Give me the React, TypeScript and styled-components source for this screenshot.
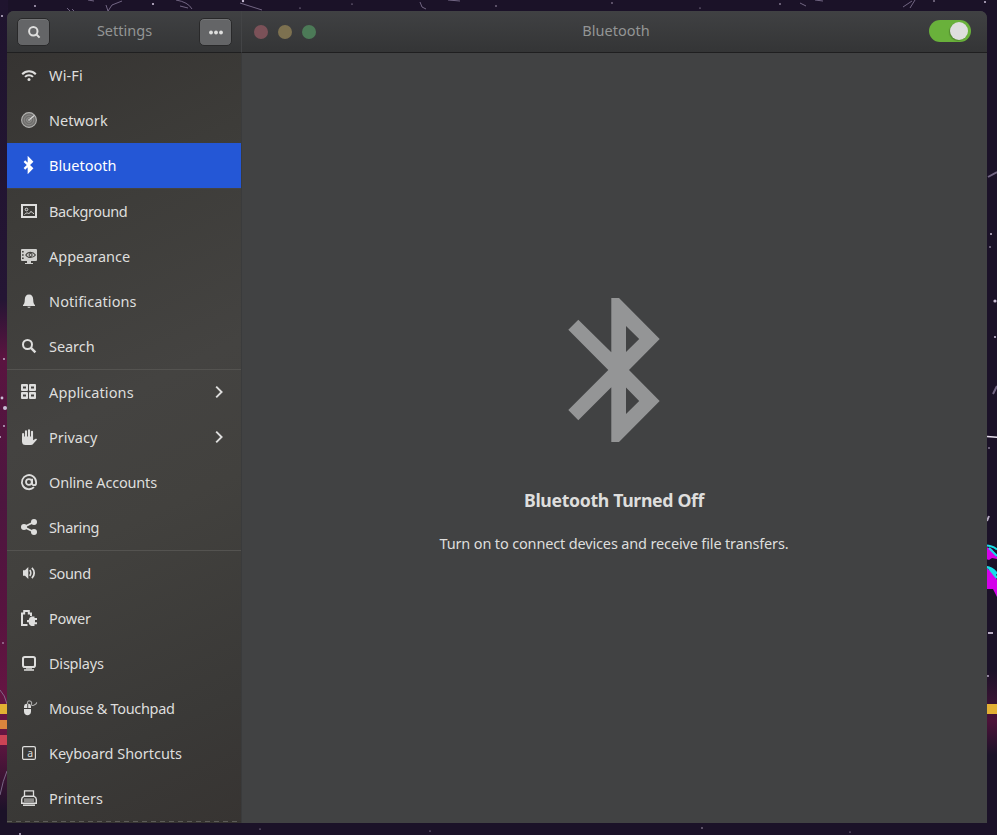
import React from "react";
import styled, { createGlobalStyle } from "styled-components";

const GlobalStyle = createGlobalStyle`
  * { box-sizing: border-box; }
  html, body { margin: 0; padding: 0; overflow: hidden; background: #1b1228; }
  body { font-family: "Noto Sans", "Open Sans", sans-serif; }
`;

const Desktop = styled.div`
  display: grid;
  grid-template: 835px / 997px;
  background: #1b1228;
`;

const WallpaperArt = styled.svg`
  grid-area: 1 / 1;
  display: block;
`;

const Window = styled.div`
  grid-area: 1 / 1;
  z-index: 1;
  margin: 11px 10px 12px 7px;
  display: grid;
  grid-template: 42px 1fr / 235px 1fr;
  border-radius: 7px 7px 0 0;
  overflow: hidden;
  background: #414243;
`;

const headerFill = `
  background: linear-gradient(#404143, #343536);
  border-bottom: 1px solid #1f1f20;
`;

const SideHeader = styled.header`
  ${headerFill}
  display: flex;
  align-items: center;
  justify-content: space-between;
  padding: 0 9px 0 10px;
  border-right: 1px solid #434446;
`;

const MainHeader = styled.header`
  ${headerFill}
  display: grid;
  grid-template-columns: 1fr auto 1fr;
  align-items: center;
  padding: 0 16px 0 12px;
`;

const HeaderTitle = styled.h1<{ $shift?: number }>`
  margin: 0 0 0 ${(p) => p.$shift ?? 0}px;
  padding-bottom: 3px;
  font-size: 14.5px;
  font-weight: 400;
  line-height: 20px;
  color: #939595;
`;

const HeaderButton = styled.button`
  width: 33px;
  height: 28px;
  margin: 0;
  padding: 0;
  display: flex;
  align-items: center;
  justify-content: center;
  border: 1px solid #29292a;
  border-radius: 5px;
  background: #646567;
  box-shadow: inset 0 1px #737476;
`;

const WindowControls = styled.div`
  display: flex;
  gap: 10px;
`;

const ControlDot = styled.span<{ $color: string }>`
  width: 14px;
  height: 14px;
  border-radius: 50%;
  background: ${(p) => p.$color};
`;

const Switch = styled.div`
  justify-self: end;
  display: flex;
  justify-content: flex-end;
  align-items: center;
  width: 42px;
  height: 22px;
  margin-bottom: 1px;
  padding: 0 3px;
  border-radius: 11px;
  background: #69b13b;
`;

const SwitchKnob = styled.span`
  width: 18px;
  height: 18px;
  border-radius: 50%;
  background: #dedede;
  box-shadow: -1px 1px 1px rgba(0, 0, 0, 0.22);
`;

const Sidebar = styled.nav`
  display: flex;
  flex-direction: column;
  border-right: 1px solid #3a3b3c;
  background: linear-gradient(155deg, #363432 0%, #3d3c39 20%, #444341 45%, #42413e 60%, #3a3937 85%, #373432 100%);
`;

const Group = styled.div<{ $line: string }>`
  border-bottom: 1px ${(p) => p.$line};
`;

const Row = styled.div<{ $selected?: boolean }>`
  display: flex;
  align-items: center;
  gap: 12px;
  height: 45px;
  padding: 0 14px 1px;
  color: ${(p) => (p.$selected ? "#ffffff" : "#dededd")};
  background: ${(p) => (p.$selected ? "#2457d6" : "transparent")};
`;

const RowLabel = styled.span<{ $tracking: number }>`
  flex: 1;
  white-space: nowrap;
  font-size: 14.5px;
  line-height: 20px;
  letter-spacing: ${(p) => p.$tracking}px;
`;

const Glyph = styled.svg`
  display: block;
  flex: none;
`;

const DashedEdge = styled.div`
  height: 2px;
  background: repeating-linear-gradient(90deg, #5d5c58 0 5px, #33312e 5px 9px);
  background-size: 100% 1px;
  background-repeat: no-repeat;
`;

const Main = styled.main`
  display: flex;
  flex-direction: column;
  align-items: center;
  padding: 245px 1px 0 0;
  background: #414243;
`;

const StatusTitle = styled.h2`
  margin: 45px 0 0;
  font-size: 17.7px;
  font-weight: 700;
  line-height: 26px;
  letter-spacing: -0.34px;
  color: #dededd;
`;

const StatusText = styled.p`
  margin: 20px 0 0;
  font-size: 14.5px;
  line-height: 20px;
  letter-spacing: -0.15px;
  color: #dededd;
`;

type IconName =
  | "wifi" | "network" | "bluetooth" | "background" | "appearance" | "bell" | "search"
  | "apps" | "hand" | "at" | "share" | "sound" | "power" | "display" | "mouse"
  | "keyboard" | "printer";

const icons: Record<IconName, React.ReactNode> = {
  wifi: (
    <g fill="none" stroke="currentColor" strokeWidth="2">
      <path d="M1.2 7.2C5 3.2 11 3.2 14.8 7.2" />
      <path d="M4 9.9C6.2 7.6 9.8 7.6 12 9.9" />
      <circle cx="8" cy="12.4" r="1.5" fill="currentColor" stroke="none" />
    </g>
  ),
  network: (
    <g fill="none">
      <circle cx="8" cy="8" r="7.4" fill="#6f6e6c" stroke="#b2b2b0" strokeWidth="1.1" />
      <circle cx="8" cy="8" r="4.8" stroke="#8f8e8c" strokeWidth=".8" />
      <circle cx="8" cy="8" r="2.4" stroke="#9b9a98" strokeWidth=".8" />
      <path d="M8 8l5.4-4.6" stroke="#dededd" strokeWidth="1.1" />
      <circle cx="8" cy="8" r="1" fill="#b2b2b0" />
    </g>
  ),
  bluetooth: (
    <path d="M3.4 4.2L10.8 11.2 7.8 14.3V1.7L10.8 4.8 3.4 11.8" fill="none" stroke="currentColor" strokeWidth="2.3" />
  ),
  background: (
    <g fill="none" stroke="currentColor">
      <path d="M1 2h14v12H1z" strokeWidth="2" />
      <circle cx="5.5" cy="6.5" r="1.3" strokeWidth="1" />
      <path d="M3.5 11.5C5 10 6 9.6 7.5 10.4S9 8.2 10 8.5 12 10.5 13 10.8" strokeWidth="1" />
    </g>
  ),
  appearance: (
    <g>
      <path d="M1 1h14a1 1 0 0 1 1 1v10a1 1 0 0 1-1 1h-5v2h2v1H4v-1h2v-2H1a1 1 0 0 1-1-1V2a1 1 0 0 1 1-1z" fill="#cfcfcd" />
      <path d="M1 3h1.700v1.600H1zM1 6.200h1.700v1.600H1zM1 9.400h1.700V11H1z" fill="#464542" />
      <path d="M4.800 7C6.800 3.500 12.200 3.500 14.400 7 12.200 10.400 6.800 10.400 4.800 7z" fill="none" stroke="#464542" strokeWidth="1.100" />
      <circle cx="9.600" cy="7" r="1.500" fill="none" stroke="#464542" strokeWidth="1.100" />
    </g>
  ),
  bell: (
    <path d="M8 1.500c2.900 0 4.100 2 4.200 5 .1 3 .5 4.800 1.800 5.600V13H2v-.9c1.300-.8 1.700-2.600 1.800-5.600C3.900 3.500 5.100 1.500 8 1.500zM6.300 13.700h3.400c-.5 1.400-2.900 1.400-3.400 0z" fill="currentColor" />
  ),
  search: (
    <g fill="none" stroke="currentColor">
      <circle cx="6.500" cy="6.500" r="4.500" strokeWidth="2" />
      <path d="M9.700 9.700L14.400 14.400" strokeWidth="2.400" />
    </g>
  ),
  apps: (
    <path
      fillRule="evenodd"
      fill="currentColor"
      d="M0 1q0-1 1-1h5q1 0 1 1v5q0 1-1 1H1Q0 7 0 6zM2 2.500h3v2H2zM8 1q0-1 1-1h5q1 0 1 1v5q0 1-1 1H9Q8 7 8 6zM10 2.500h3v2h-3zM0 9q0-1 1-1h5q1 0 1 1v5q0 1-1 1H1q-1 0-1-1zM2 10.500h3v2H2zM8 9q0-1 1-1h5q1 0 1 1v5q0 1-1 1H9q-1 0-1-1zM10 10.500h3v2h-3z"
    />
  ),
  hand: (
    <g fill="none" stroke="currentColor" strokeWidth="2.100" strokeLinecap="round">
      <path d="M2.100 5v7M5 2.200V9M8 1.200V9M11 2.800v8" />
      <path d="M1.050 7.500h11v3.800l2.600-1.500q1.600-.4 1.200.9L12.500 14.500Q11.500 16 9.500 16H4.500Q1.050 16 1.050 12.500z" fill="currentColor" stroke="none" />
    </g>
  ),
  at: (
    <g fill="none" stroke="currentColor" strokeWidth="1.800">
      <path d="M13 13.200A7.100 7.100 0 1 1 15.100 8v1.200c0 2.600-4 2.700-4 0V4.700" />
      <circle cx="7.900" cy="8" r="2.900" />
    </g>
  ),
  share: (
    <g fill="currentColor">
      <circle cx="13" cy="3" r="3" />
      <circle cx="3" cy="8" r="3" />
      <circle cx="13" cy="13" r="3" />
      <path d="M13 3L3 8l10 5" fill="none" stroke="currentColor" strokeWidth="1.900" />
    </g>
  ),
  sound: (
    <g fill="none" stroke="currentColor">
      <path d="M2 5.300h2L7.300 2v12L4 10.700H2z" fill="currentColor" stroke="none" />
      <path d="M8.700 5.200c1.400 1.500 1.400 4.100 0 5.600" strokeWidth="1.700" />
      <path d="M10.900 2.800c3 2.800 3 7.600 0 10.400" strokeWidth="1.800" />
    </g>
  ),
  power: (
    <g>
      <path d="M6.500 15H1V3.500h2.200V1h4.600v2.500H10V6" fill="none" stroke="currentColor" strokeWidth="2" />
      <path d="M10.500 6.500h3v1.500H16v2h-2v2.200h2v2h-2.500V16h-3Q8 15.500 7.700 12.300H6v-2.200h1.700Q8 7 10.500 6.500z" fill="currentColor" />
    </g>
  ),
  display: (
    <g fill="none" stroke="currentColor">
      <rect x="2" y="2" width="12" height="10" rx="1.800" strokeWidth="2" />
      <path d="M3 15h10" strokeWidth="1.500" />
      <path d="M5 13.800h6" strokeWidth="1" />
    </g>
  ),
  mouse: (
    <g>
      <path d="M3 8V6.500Q3 4 5.500 3.700h.8V8zM7.200 8V3.700H8Q10 4 10 6.500V8zM3 9h7v2.500c0 5-7 5-7 0z" fill="currentColor" />
      <path d="M6.500 4V2.200Q7 .5 9 1t1.600 3 2.600 1T15.500 2.300" fill="none" stroke="#a9a9a7" strokeWidth="1.100" />
    </g>
  ),
  keyboard: (
    <g>
      <rect x="1.600" y="1.600" width="12.800" height="12.800" rx="1.500" fill="none" stroke="currentColor" strokeWidth="1.200" />
      <text x="6.200" y="12" fontSize="10.500" fill="currentColor">a</text>
    </g>
  ),
  printer: (
    <g fill="none" stroke="currentColor">
      <path d="M3.500 6.500V.8h9v5.700" strokeWidth="1.300" />
      <path d="M3 6.300h10q2.300 1 2.300 3v4H.7v-4q0-2 2.300-3z" strokeWidth="1.400" />
      <path d="M3 8.300h10v3.700H3z" fill="#8c8b89" stroke="none" />
      <path d="M2 15.200h12" strokeWidth="1.500" />
    </g>
  ),
};

interface Item {
  icon: IconName;
  label: string;
  tracking: number;
  selected?: boolean;
  submenu?: boolean;
}

const groups: { line: string; items: Item[] }[] = [
  {
    line: "solid #454340",
    items: [
      { icon: "wifi", label: "Wi-Fi", tracking: 0.15 },
      { icon: "network", label: "Network", tracking: 0.05 },
      { icon: "bluetooth", label: "Bluetooth", tracking: 0.02, selected: true },
    ],
  },
  {
    line: "solid #545350",
    items: [
      { icon: "background", label: "Background", tracking: -0.42 },
      { icon: "appearance", label: "Appearance", tracking: -0.02 },
      { icon: "bell", label: "Notifications", tracking: 0.11 },
      { icon: "search", label: "Search", tracking: -0.05 },
    ],
  },
  {
    line: "solid #545350",
    items: [
      { icon: "apps", label: "Applications", tracking: 0.12, submenu: true },
      { icon: "hand", label: "Privacy", tracking: 0, submenu: true },
      { icon: "at", label: "Online Accounts", tracking: -0.19 },
      { icon: "share", label: "Sharing", tracking: -0.38 },
    ],
  },
  {
    line: "none",
    items: [
      { icon: "sound", label: "Sound", tracking: -0.36 },
      { icon: "power", label: "Power", tracking: -0.2 },
      { icon: "display", label: "Displays", tracking: -0.22 },
      { icon: "mouse", label: "Mouse & Touchpad", tracking: -0.33 },
      { icon: "keyboard", label: "Keyboard Shortcuts", tracking: -0.03 },
      { icon: "printer", label: "Printers", tracking: 0.03 },
    ],
  },
];

function Icon({ name }: { name: IconName }) {
  return (
    <Glyph width="16" height="16" viewBox="0 0 16 16" overflow="visible">
      {icons[name]}
    </Glyph>
  );
}

const stars = [
  [2, 16, 1], [35, 6, 0.9], [153, 4, 1.1], [243, 1, 1.2], [300, 8, 0.6], [352, 4, 0.6], [496, 6, 0.7],
  [612, 3, 0.7], [700, 8, 0.6], [780, 4, 0.8], [934, 1, 0.8], [985, 2, 1], [991, 234, 1], [990, 247, 0.8],
  [995, 301, 1.6], [995, 337, 1.1], [989, 448, 0.8], [992, 555, 0.8], [988, 676, 0.9], [4, 359, 0.9],
  [2, 398, 1.4], [5, 408, 2], [4, 426, 0.9], [0, 437, 1], [3, 643, 0.8], [20, 834, 1], [260, 829, 0.6],
  [430, 831, 0.6], [702, 828, 0.7], [850, 832, 0.6],
];

function Wallpaper() {
  return (
    <WallpaperArt width="997" height="835" viewBox="0 0 997 835">
      <defs>
        <linearGradient id="glowLeft" x1="0" y1="0" x2="0" y2="1">
          <stop offset="0" stopColor="#1f142e" />
          <stop offset=".37" stopColor="#241534" />
          <stop offset=".44" stopColor="#5a1440" />
          <stop offset=".62" stopColor="#4d163f" />
          <stop offset=".76" stopColor="#58133f" />
          <stop offset=".9" stopColor="#6a1644" />
          <stop offset="1" stopColor="#1d1229" />
        </linearGradient>
        <linearGradient id="glowRight" x1="0" y1="0" x2="0" y2="1">
          <stop offset="0" stopColor="#1b1228" />
          <stop offset=".4" stopColor="#3a1334" />
          <stop offset=".6" stopColor="#4c1239" />
          <stop offset="1" stopColor="#1b1228" />
        </linearGradient>
      </defs>
      <rect width="997" height="835" fill="#1b1228" />
      <rect width="8" height="810" fill="url(#glowLeft)" />
      <rect x="986" y="670" width="11" height="85" fill="url(#glowRight)" />
      <g fill="none" stroke="#8f82a2" opacity=".75">
        <path d="M88 0l6 1M106 5l2 6 4-6 10-4M176 0q12 2 16 9M180 6l8 2M240 3l22 7M67 8l3 3M72 9l2 2" />
        <path d="M0 690q5 5 7 14M0 795q3-15 7-24" />
        <path d="M420 2l2 5 4 2M448 0l12 1M800 3l6 3M815 0l8 1M903 7l9-6M915 0l-5 8" />
        <path d="M988 177l9-5M993 394l4-8" strokeWidth="2" />
      </g>
      <path d="M987 436.500l10 .8" stroke="#e8e0ee" strokeWidth="1.500" />
      <path d="M987 521l2-5M988 633h5" stroke="#b6abc2" strokeWidth="2" />
      {stars.map(([x, y, r]) => (
        <circle key={`${x}-${y}`} cx={x} cy={y} r={r} fill="#c9bdd5" />
      ))}
      <path d="M986 547l6 2 5 8v2l-5-1-3 2-3-1z" fill="#d400ea" />
      <path d="M986 545.500q6 0 11 4M989 548l8 8" fill="none" stroke="#18dce8" strokeWidth="2" />
      <path d="M986 568q7 3 11 12v17l-4-8h-7z" fill="#d400ea" />
      <path d="M986 567q7 1 11 7M989 568l8 10" fill="none" stroke="#18dce8" strokeWidth="2.500" />
      <rect y="704" width="8" height="10" fill="#e3b033" />
      <rect y="720" width="8" height="9" fill="#d9853d" />
      <rect y="735" width="8" height="10" fill="#cc4355" />
      <rect x="986" y="704" width="11" height="10" fill="#e3b033" />
    </WallpaperArt>
  );
}

export default function App() {
  return (
    <>
      <GlobalStyle />
      <Desktop>
        <Wallpaper />
        <Window>
          <SideHeader>
            <HeaderButton aria-label="Search">
              <Glyph width="14" height="14" viewBox="0 0 14 14" fill="none" stroke="#dededd" strokeWidth="2">
                <circle cx="6.300" cy="6.300" r="4.200" />
                <path d="M9.200 9.200L12.600 12.600" />
              </Glyph>
            </HeaderButton>
            <HeaderTitle>Settings</HeaderTitle>
            <HeaderButton aria-label="Menu">
              <Glyph width="16" height="16" viewBox="0 0 16 16" fill="#dededd">
                <circle cx="3" cy="8.500" r="1.900" />
                <circle cx="8" cy="8.500" r="1.900" />
                <circle cx="13" cy="8.500" r="1.900" />
              </Glyph>
            </HeaderButton>
          </SideHeader>
          <MainHeader>
            <WindowControls>
              <ControlDot $color="#7b5158" />
              <ControlDot $color="#7d7150" />
              <ControlDot $color="#4c7a57" />
            </WindowControls>
            <HeaderTitle $shift={7}>Bluetooth</HeaderTitle>
            <Switch>
              <SwitchKnob />
            </Switch>
          </MainHeader>
          <Sidebar>
            {groups.map((group, i) => (
              <Group key={i} $line={group.line}>
                {group.items.map((item) => (
                  <Row key={item.label} $selected={item.selected}>
                    <Icon name={item.icon} />
                    <RowLabel $tracking={item.tracking}>{item.label}</RowLabel>
                    {item.submenu && (
                      <Glyph width="16" height="16" viewBox="0 0 16 16" fill="none" stroke="currentColor" strokeWidth="1.900">
                        <path d="M5.200 2.600L10.600 8l-5.400 5.400" />
                      </Glyph>
                    )}
                  </Row>
                ))}
              </Group>
            ))}
            <DashedEdge />
          </Sidebar>
          <Main>
            <Glyph width="92" height="144" viewBox="568 298 92 144">
              <path
                fill="#949596"
                fillRule="evenodd"
                d="M611.300 298H619L659.700 339 629 370l30.700 31L619 442h-7.700v-54.700L578.300 420.300 568.300 410l40-40-40-40.300 10-10 33 32.600zM626 326v26l13.200-13zM626 387.500v26.500l13.200-13z"
              />
            </Glyph>
            <StatusTitle>Bluetooth Turned Off</StatusTitle>
            <StatusText>Turn on to connect devices and receive file transfers.</StatusText>
          </Main>
        </Window>
      </Desktop>
    </>
  );
}
